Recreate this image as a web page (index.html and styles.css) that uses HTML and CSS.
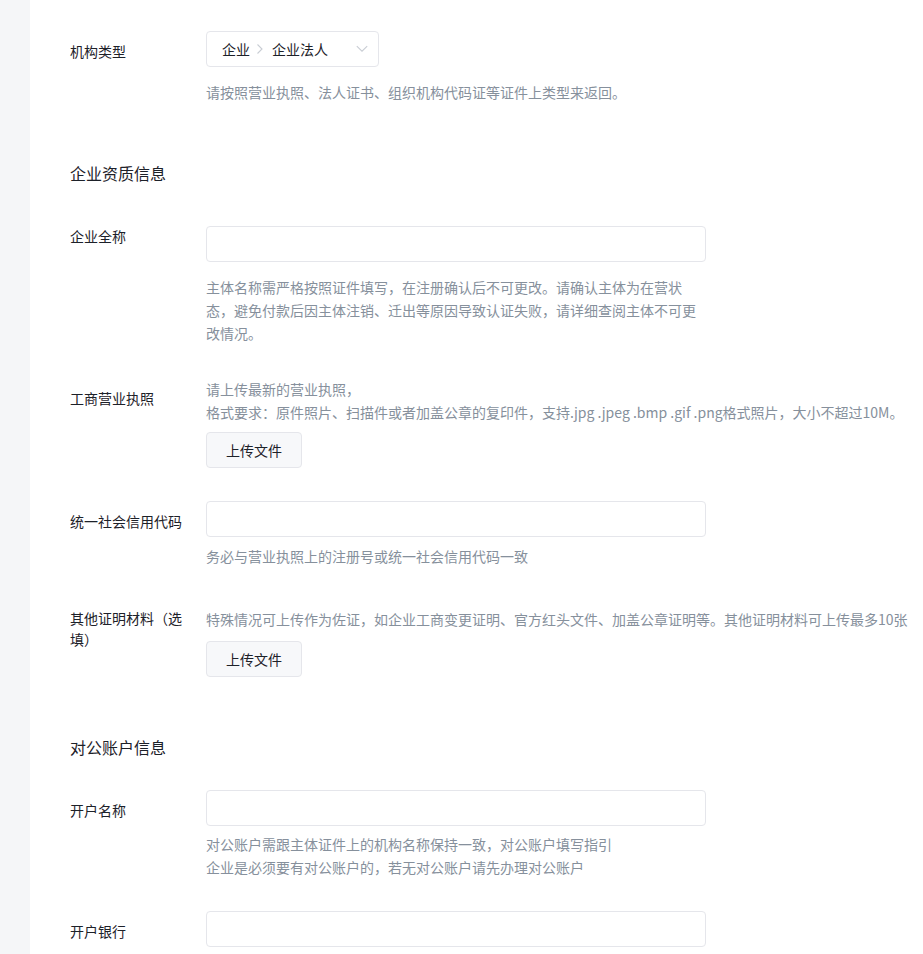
FILE: index.html
```html
<!DOCTYPE html>
<html lang="zh-CN">
<head>
<meta charset="utf-8">
<title>企业认证</title>
<link rel="stylesheet" href="styles.css">
</head>
<body>
<div class="layout">
  <div class="sidebar"></div>
  <main class="main">
    <div class="form">
      <div class="row">
        <div class="label">机构类型</div>
        <div class="field">
          <div class="select">
            <span class="sel-text">企业</span>
            <svg class="sep" width="8" height="12" viewBox="0 0 8 12"><path d="M1.5 1.5 L6 6 L1.5 10.5" fill="none" stroke="#c9cdd4" stroke-width="1.1"/></svg>
            <span class="sel-text">企业法人</span>
            <svg class="arrow" width="12" height="8" viewBox="0 0 12 8"><path d="M0.8 1.2 L6 6.2 L11.2 1.2" fill="none" stroke="#c9cdd4" stroke-width="1.1"/></svg>
          </div>
          <div class="help help-wide">请按照营业执照、法人证书、组织机构代码证等证件上类型来返回。</div>
        </div>
      </div>

      <h3 class="section-title title-first">企业资质信息</h3>

      <div class="row row-name">
        <div class="label label-top">企业全称</div>
        <div class="field">
          <div class="input"></div>
          <div class="help help-wide help-wrap">主体名称需严格按照证件填写，在注册确认后不可更改。请确认主体为在营状态，避免付款后因主体注销、迁出等原因导致认证失败，请详细查阅主体不可更改情况。</div>
        </div>
      </div>

      <div class="row row-license">
        <div class="label label-text">工商营业执照</div>
        <div class="field">
          <div class="help nowrap">请上传最新的营业执照，</div>
          <div class="help nowrap">格式要求：原件照片、扫描件或者加盖公章的复印件，支持.jpg .jpeg .bmp .gif .png格式照片，大小不超过10M。</div>
          <button class="upload upload-license" type="button">上传文件</button>
        </div>
      </div>

      <div class="row row-code">
        <div class="label">统一社会信用代码</div>
        <div class="field">
          <div class="input"></div>
          <div class="help help-near">务必与营业执照上的注册号或统一社会信用代码一致</div>
        </div>
      </div>

      <div class="row row-other">
        <div class="label label-top">其他证明材料（选填）</div>
        <div class="field">
          <div class="help nowrap">特殊情况可上传作为佐证，如企业工商变更证明、官方红头文件、加盖公章证明等。其他证明材料可上传最多10张</div>
          <button class="upload upload-other" type="button">上传文件</button>
        </div>
      </div>

      <h3 class="section-title title-second">对公账户信息</h3>

      <div class="row row-account">
        <div class="label">开户名称</div>
        <div class="field">
          <div class="input"></div>
          <div class="help help-near2">对公账户需跟主体证件上的机构名称保持一致，对公账户填写指引<br>企业是必须要有对公账户的，若无对公账户请先办理对公账户</div>
        </div>
      </div>

      <div class="row row-bank">
        <div class="label">开户银行</div>
        <div class="field">
          <div class="input"></div>
        </div>
      </div>
    </div>
  </main>
</div>
</body>
</html>
```

FILE: styles.css
```css
html, body {
  margin: 0;
  padding: 0;
  overflow: hidden;
  background: #ffffff;
}

body {
  font-family: "Noto Sans CJK SC", "Noto Sans", "Liberation Sans", sans-serif;
  font-size: 14px;
  color: #1d2129;
}

.layout {
  display: flex;
  min-height: 100vh;
}

.sidebar {
  flex: 0 0 30px;
  background: #f5f6f8;
}

.main {
  flex: 1;
  padding-left: 40px;
  min-width: 0;
}

.form {
  padding-top: 31px;
}

.row {
  display: flex;
  align-items: flex-start;
}

.label {
  flex: 0 0 120px;
  width: 120px;
  margin-right: 16px;
  padding-top: 10px;
  line-height: 21px;
  font-size: 14px;
  color: #1d2129;
}

.label-top {
  padding-top: 0;
}

.label-text {
  padding-top: 10px;
}

.field {
  flex: 1;
  min-width: 0;
  display: flex;
  flex-direction: column;
  align-items: flex-start;
}

.select {
  box-sizing: border-box;
  width: 173px;
  height: 36px;
  border: 1px solid #e5e6eb;
  border-radius: 4px;
  display: flex;
  align-items: center;
  padding-left: 15px;
  padding-right: 10px;
  background: #fff;
}

.sel-text {
  font-size: 14px;
  line-height: 20px;
  color: #1d2129;
}

.sep {
  margin: 0 8px 0 6px;
}

.arrow {
  margin-left: auto;
}

.input {
  box-sizing: border-box;
  width: 500px;
  height: 36px;
  border: 1px solid #e5e6eb;
  border-radius: 4px;
  background: #fff;
}

.help {
  font-size: 14px;
  line-height: 23px;
  color: #86909c;
}

.help-wide {
  margin-top: 14px;
}

.help-wrap {
  width: 500px;
}

.nowrap {
  white-space: nowrap;
}

.help-near {
  margin-top: 8px;
}

.help-near2 {
  margin-top: 7px;
}

.upload {
  box-sizing: border-box;
  width: 96px;
  height: 36px;
  border: 1px solid #e5e6eb;
  border-radius: 4px;
  background: #f7f8fa;
  font-family: inherit;
  font-size: 14px;
  color: #1d2129;
  padding: 0;
  cursor: pointer;
}

.upload-license {
  margin-top: 8px;
}

.upload-other {
  margin-top: 10px;
}

.section-title {
  margin: 0;
  font-size: 16px;
  font-weight: 400;
  line-height: 24px;
  color: #1d2129;
}

.title-first {
  margin-top: 57px;
}

.title-second {
  margin-top: 58px;
}

.row-name {
  margin-top: 41px;
}

.row-license {
  margin-top: 33px;
}

.row-code {
  margin-top: 33px;
}

.row-other {
  margin-top: 40px;
}

.row-account {
  margin-top: 31px;
}

.row-bank {
  margin-top: 32px;
}
```
